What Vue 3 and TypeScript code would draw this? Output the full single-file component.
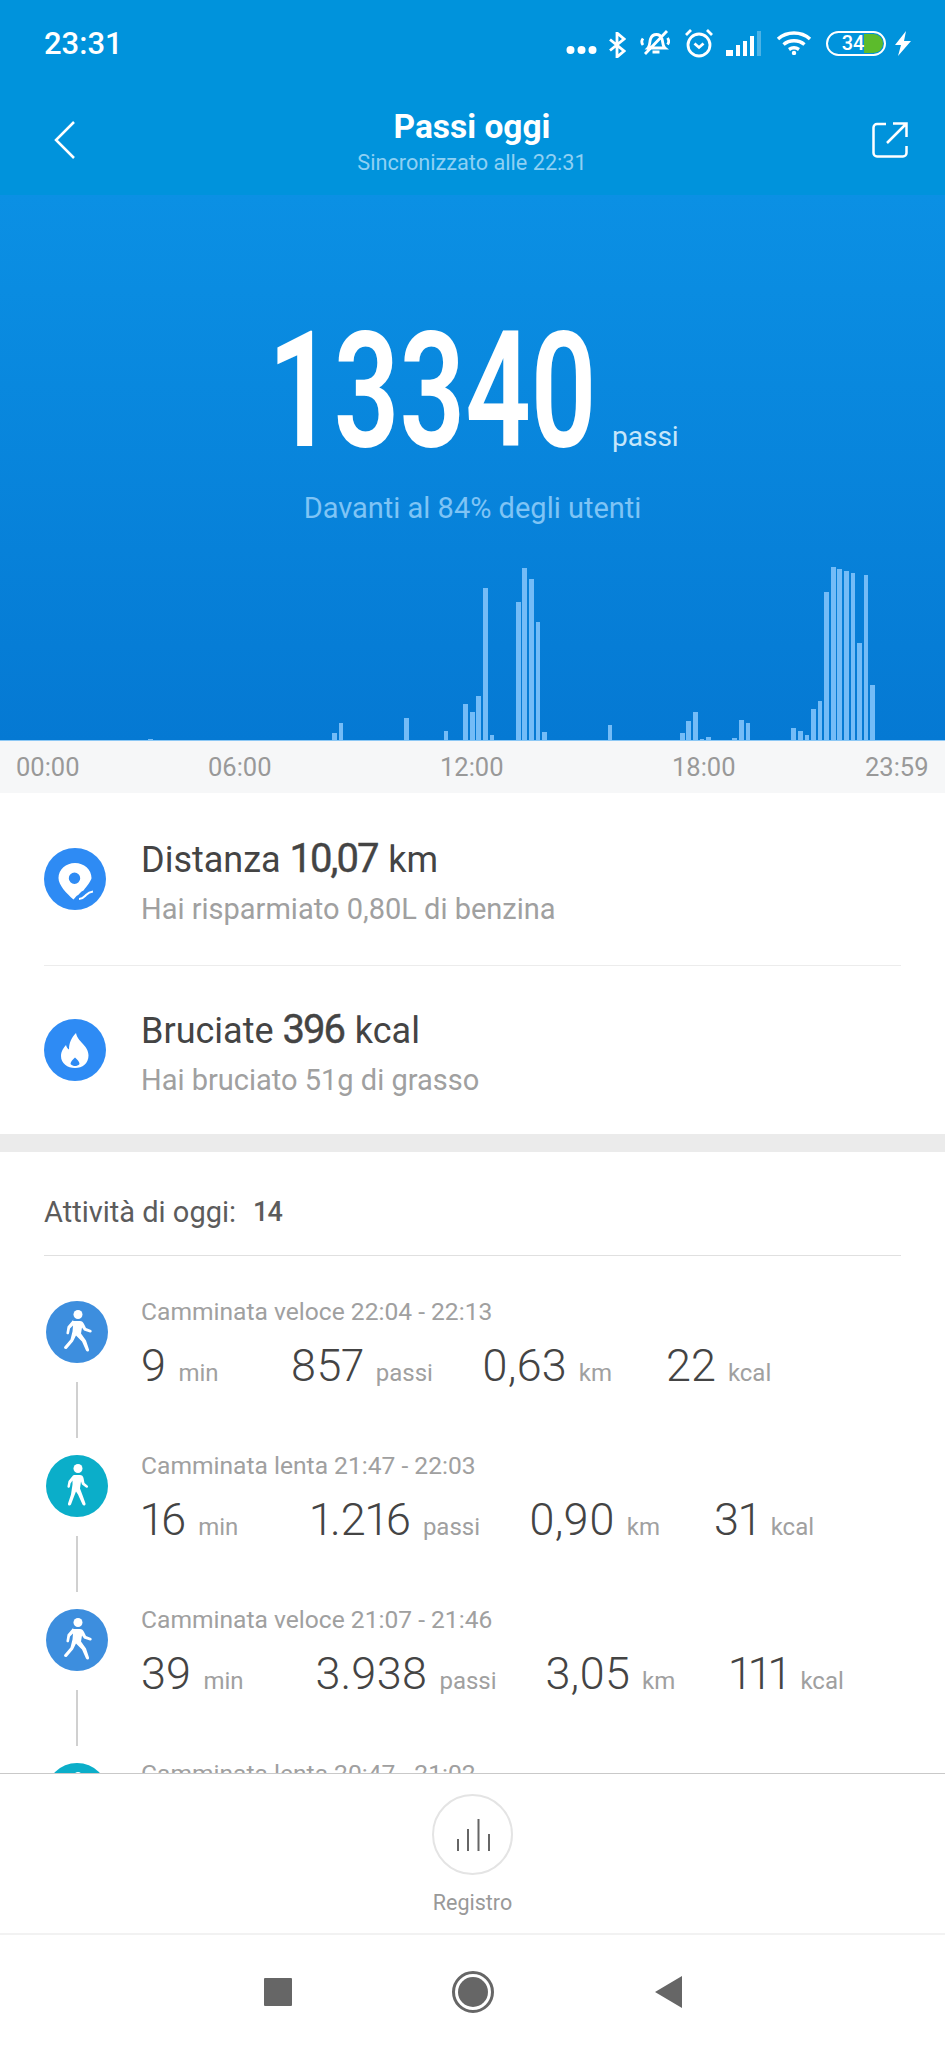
<template>
  <div class="screen">
    <header class="top">
      <div class="status">
        <span class="clock">23:31</span>
        <div class="status-icons">
          <svg class="ic dots" width="31" height="10" viewBox="0 0 31 10"><circle cx="4.500" cy="5" r="4" /><circle cx="15.500" cy="5" r="4" /><circle cx="26.500" cy="5" r="4" /></svg>
          <svg class="ic-line bt" width="18" height="26" viewBox="0 0 18 26"><path d="M2 7.500 16 19 9 25V1l7 6L2 18.500" /></svg>
          <svg class="ic-line" width="30" height="28" viewBox="0 0 30 28"><path d="M8 19c2-2 1.500-6 2.500-9 1-3 3.500-4.500 6-4.500S21 7 22 10s.5 7 3 9H8ZM12.500 23h7M27 2 5 25M3 9.500c-1.500 2-1.500 4.500 0 6.500M27.500 9c1.500 2 1.500 4.500 0 6.500" /></svg>
          <svg class="ic-line" width="30" height="30" viewBox="0 0 30 30"><circle cx="15" cy="17" r="11" /><path d="m10.500 15.500 4.500 4 4.500-4M2 7l5-5M28 7l-5-5" /></svg>
          <svg class="ic" width="36" height="25" viewBox="0 0 36 25"><rect x="0" y="19" width="7" height="6" /><rect x="10" y="14" width="4" height="11" /><rect x="17" y="10" width="4" height="15" /><rect x="24" y="5" width="4" height="20" /><rect x="31" y="0" width="4" height="25" opacity=".3" /></svg>
          <svg class="ic-wifi" width="36" height="24" viewBox="0 0 36 24"><path d="M2 8c9-8 23-8 32 0M7.500 13.500c6-5 15-5 21 0M13 18.500c3-2 7-2 10 0" /><circle cx="18" cy="22" r="2.200" fill="#fff" stroke="none" /></svg>
          <div class="battery"><i class="battery-fill"></i><span>34</span></div>
          <svg class="ic" width="16" height="25" viewBox="0 0 16 25"><path d="M11 0 0 14h6l-3 11L16 10H9l2-10Z" /></svg>
        </div>
      </div>
      <div class="nav">
        <svg class="back" width="22" height="38" viewBox="0 0 22 38"><path d="M20 1 2 19l18 18" /></svg>
        <div class="nav-title">
          <div class="title">Passi oggi</div>
          <div class="sub">Sincronizzato alle 22:31</div>
        </div>
        <svg class="share" width="36" height="36" viewBox="0 0 36 36"><path d="M14 2H5a3.500 3.500 0 0 0-3.500 3.500V31A3.500 3.500 0 0 0 5 34.500h26a3.500 3.500 0 0 0 3.500-3.500v-7M15 21 34 2M21 1.500h13.500V15" /></svg>
      </div>
    </header>

    <section class="hero">
      <div class="count">
        <span class="count-num">13340</span>
        <span class="count-unit">passi</span>
      </div>
      <div class="rank">Davanti al 84% degli utenti</div>
      <div class="chart">
        <div v-for="(h, i) in bars" :key="i" class="slot">
          <div v-if="h" class="bar" :style="{ height: h + 'px' }"></div>
        </div>
      </div>
    </section>

    <div class="axis">
      <span v-for="t in ticks" :key="t">{{ t }}</span>
    </div>

    <section class="summary">
      <div class="sum-row">
        <div class="sum-icon">
          <svg width="62" height="62" viewBox="0 0 62 62">
            <path fill="#fff" fill-rule="evenodd" d="M31 15c-9 0-16.500 6.500-16.500 15 0 7 8 15.500 15 21.500l3-3.500c3-1.500 4-4.500 7-5.500 4-5 8-10.500 8-12.500C47.500 21.500 40 15 31 15Zm-.5 9.500a5.700 5.700 0 1 1 0 11.400 5.700 5.700 0 0 1 0-11.400Z" />
            <path fill="none" stroke="#fff" stroke-width="2" d="M35 51c4 0 5-2 7-4s3-3 7-3.500" />
          </svg>
        </div>
        <div class="sum-text">
          <div class="sum-title">Distanza <b>10,07</b> km</div>
          <div class="sum-sub">Hai risparmiato 0,80L di benzina</div>
        </div>
      </div>
      <div class="sum-row sum-row-last">
        <div class="sum-icon">
          <svg width="62" height="62" viewBox="0 0 62 62">
            <path fill="#fff" fill-rule="evenodd" d="M32 14c1 5 3.500 7 6.500 10.500 3 3 6 7 6 12 0 8-6 12.500-13.500 12.500S17 44.500 17 37c0-5 3-8.500 5-11 .5 2 1.500 3.500 3 4.500C25 24 27.500 18.500 32 14Zm-1 24.500c-2 2-4.500 4-4.500 6.500 1.500 1.500 3 2 4.500 2s3.500-.5 4.500-2c0-2.500-2.500-4.500-4.500-6.500Z" />
          </svg>
        </div>
        <div class="sum-text">
          <div class="sum-title">Bruciate <b>396</b> kcal</div>
          <div class="sum-sub">Hai bruciato 51g di grasso</div>
        </div>
      </div>
    </section>

    <section class="activities">
      <div class="act-head">Attività di oggi:<span>14</span></div>
      <div class="act-list">
        <div v-for="(a, i) in activities" :key="i" class="act">
          <div class="rail">
            <div class="act-icon" :class="a.fast ? 'fast' : 'slow'">
              <svg width="62" height="62" viewBox="0 0 62 62" fill="#fff">
                <circle cx="32" cy="13.500" r="4.500" />
                <path v-if="a.fast" d="M27 20h7c2 0 3 1 4 3l2 4 5 2c1.500 1 .5 3-1 2.500l-6-2-2-3-1 6 5 7 3 9c.5 2-2 3-3 1l-4-9-6-6-3 6-6 7c-1.500 1.500-4-.5-2.500-2l6-7 2-8 .5-6-3 3-1 5c-.5 1.500-3 1-2.500-1l1-6 6-7Z" />
                <path v-else d="M28 20h6c2 0 3 1 3.500 3l1 5 3 2.500c1.500 1.500 0 3-1.500 2l-4-3-1-3-1 7 3 8 2.500 7c.5 2-2 3-3 1l-4.500-10-2-3-2 5-3 8c-1 2-3.500 1-3-1l3-9 1.500-10v-4l-2 3-.5 3c-.5 2-3 1.500-2.500-.5l1-5 4.500-5.500Z" />
              </svg>
            </div>
            <div class="rail-line"></div>
          </div>
          <div class="act-body">
            <div class="act-title">{{ a.title }}</div>
            <div class="stats">
              <span v-for="s in a.stats" :key="s.unit" class="stat">
                <span class="num">{{ s.value }}</span><span class="unit">{{ s.unit }}</span>
              </span>
            </div>
          </div>
        </div>
      </div>
    </section>

    <footer class="bottom">
      <div class="log-btn">
        <svg width="36" height="32" viewBox="0 0 36 32"><path d="M3 32V20M13 32V10M23.500 32V0M34 32V15" /></svg>
      </div>
      <div class="log-label">Registro</div>
    </footer>

    <div class="sysnav">
      <div class="sys-square"></div>
      <div class="sys-home"><i></i></div>
      <svg width="28" height="32" viewBox="0 0 28 32"><path fill="#666" d="M28 0v32L1 16 28 0Z" /></svg>
    </div>
  </div>
</template>

<script setup lang="ts">
interface Stat {
  value: string
  unit: string
}

interface Activity {
  title: string
  fast: boolean
  stats: Stat[]
}

// altezze lette dal grafico, una colonna ogni 10 minuti
const peaks: Record<number, number> = {
  22: 1, 50: 7, 51: 17, 61: 22, 67: 9, 70: 36, 71: 28, 72: 44, 73: 152, 74: 5,
  78: 138, 79: 172, 80: 161, 81: 118, 82: 8, 92: 15, 103: 7, 104: 19, 105: 28,
  106: 1, 107: 3, 111: 2, 112: 20, 113: 17, 120: 12, 121: 9, 122: 5, 123: 31,
  124: 39, 125: 148, 126: 173, 127: 171, 128: 169, 129: 167, 130: 97, 131: 165, 132: 55,
}

const bars: number[] = Array.from({ length: 144 }, (_, i) => peaks[i] ?? 0)

const ticks = ['00:00', '06:00', '12:00', '18:00', '23:59']

const makeStats = (min: string, steps: string, km: string, kcal: string): Stat[] => [
  { value: min, unit: 'min' },
  { value: steps, unit: 'passi' },
  { value: km, unit: 'km' },
  { value: kcal, unit: 'kcal' },
]

const activities: Activity[] = [
  { title: 'Camminata veloce 22:04 - 22:13', fast: true, stats: makeStats('9', '857', '0,63', '22') },
  { title: 'Camminata lenta 21:47 - 22:03', fast: false, stats: makeStats('16', '1.216', '0,90', '31') },
  { title: 'Camminata veloce 21:07 - 21:46', fast: true, stats: makeStats('39', '3.938', '3,05', '111') },
  // l'ultima riga resta tagliata dalla barra in basso, si vede solo il titolo
  { title: 'Camminata lenta 20:47 - 21:02', fast: false, stats: [] },
]
</script>

<style>
html,
body {
  margin: 0;
  background: #fff;
}
</style>

<style scoped>
.screen {
  width: 945px;
  height: 2048px;
  display: flex;
  flex-direction: column;
  overflow: hidden;
  background: #fff;
  font-family: Roboto, "Liberation Sans", sans-serif;
  color: #444;
}

.top {
  height: 195px;
  flex: none;
  background: #0093dc;
  color: #fff;
}

.status {
  height: 86px;
  display: flex;
  justify-content: space-between;
  align-items: center;
  padding: 0 34px 0 44px;
}

.clock {
  font-size: 31px;
  font-weight: 500;
}

.status-icons {
  display: flex;
  align-items: center;
  gap: 14px;
}

.status-icons > :nth-child(2) {
  margin-left: -3px;
}

.status-icons > :nth-child(5) {
  margin-left: -2px;
}

.status-icons > :nth-child(8) {
  margin-left: -5px;
}

.dots {
  margin-top: 14px;
}

.bt {
  margin-top: 4px;
}

.ic {
  fill: #fff;
}

.ic-line {
  fill: none;
  stroke: #fff;
  stroke-width: 2.800;
}

.ic-wifi {
  fill: none;
  stroke: #fff;
  stroke-width: 3.500;
}

.battery {
  position: relative;
  width: 60px;
  height: 25px;
  box-sizing: border-box;
  border: 2.500px solid #fff;
  border-radius: 13px;
  overflow: hidden;
  display: flex;
  align-items: center;
  justify-content: center;
  padding-right: 6px;
  font-size: 20px;
  font-weight: 500;
}

.battery span {
  position: relative;
}

.battery-fill {
  position: absolute;
  top: 1px;
  bottom: 1px;
  left: 36px;
  right: 1px;
  background: #5cbb2c;
  border-radius: 0 10px 10px 0;
}

.nav {
  display: flex;
  justify-content: space-between;
  align-items: center;
  padding: 21px 37px 0 54px;
}

.back {
  fill: none;
  stroke: #fff;
  stroke-width: 2.500;
  margin-top: -3px;
}

.share {
  fill: none;
  stroke: #fff;
  stroke-width: 2.500;
  margin-top: -3px;
}

.nav-title {
  text-align: center;
  padding-right: 4px;
}

.title {
  font-size: 33.500px;
  font-weight: 700;
  line-height: 40px;
}

.sub {
  margin-top: 3px;
  font-size: 21.700px;
  line-height: 26px;
  color: #8fd0f3;
}

.hero {
  height: 546px;
  flex: none;
  display: flex;
  flex-direction: column;
  background: linear-gradient(#0b90e4, #0579d3);
}

.count {
  margin-top: 126px;
  display: flex;
  align-items: baseline;
  padding-left: 268px;
}

.count-num {
  font-size: 162px;
  font-weight: 600;
  line-height: 140px;
  color: #fff;
  width: 330px;
  display: inline-block;
  transform: scaleX(0.71);
  transform-origin: left center;
  white-space: nowrap;
}

.count-unit {
  margin-left: 14px;
  font-size: 28px;
  line-height: 34px;
  color: #c6e6fa;
}

.rank {
  margin-top: 30px;
  text-align: center;
  font-size: 29px;
  line-height: 34px;
  color: #7fc4f5;
}

.chart {
  margin-top: auto;
  height: 176px;
  box-sizing: content-box;
  padding-left: 3px;
  display: flex;
  align-items: flex-end;
  overflow: hidden;
  border-bottom: 1px solid #8cc8f5;
}

.slot {
  flex: none;
  width: 6.5625px;
  display: flex;
  justify-content: center;
}

.bar {
  width: 4.700px;
  background: #74bcf7;
}

.axis {
  height: 52px;
  flex: none;
  display: grid;
  grid-template-columns: 192px 232px 232px 193px auto;
  align-items: center;
  padding: 0 16px;
  background: #f6f7f8;
  font-size: 25.500px;
  color: #999;
}

.summary {
  flex: none;
  padding: 0 44px;
  border-bottom: 18px solid #ebebeb;
}

.sum-row {
  height: 173px;
  display: flex;
  align-items: center;
  gap: 35px;
  border-bottom: 1px solid #ececec;
  box-sizing: border-box;
}

.sum-row-last {
  border-bottom: none;
  height: 168px;
}

.sum-icon {
  width: 62px;
  height: 62px;
  border-radius: 50%;
  background: #2e8bf4;
  flex: none;
}

.sum-text {
  padding-top: 4px;
}

.sum-title {
  font-size: 36px;
  line-height: 44px;
  color: #444;
}

.sum-title b {
  font-size: 40px;
  font-weight: 400;
  -webkit-text-stroke: 0.4px #444;
  letter-spacing: -2px;
  margin-right: 2px;
}

.sum-sub {
  margin-top: 10px;
  font-size: 29px;
  line-height: 34px;
  color: #a0a0a0;
}

.activities {
  flex: 1;
  min-height: 0;
  overflow: hidden;
  padding: 0 44px;
}

.act-head {
  height: 104px;
  padding-top: 16px;
  box-sizing: border-box;
  display: flex;
  align-items: center;
  gap: 17px;
  font-size: 29px;
  color: #5c5c5c;
  border-bottom: 1px solid #e0e0e0;
}

.act-head span {
  font-size: 27px;
  font-weight: 500;
  letter-spacing: -1px;
}

.act-list {
  padding-top: 45px;
}

.act {
  height: 154px;
  display: flex;
  gap: 33px;
}

.rail {
  width: 62px;
  margin-left: 2px;
  flex: none;
  display: flex;
  flex-direction: column;
  align-items: center;
}

.act-icon {
  width: 62px;
  height: 62px;
  border-radius: 50%;
}

.act-icon.fast {
  background: #3d8ede;
}

.act-icon.slow {
  background: #0baec9;
}

.rail-line {
  margin-top: 19px;
  width: 2px;
  height: 56px;
  background: #d0d0d0;
}

.act-title {
  font-size: 24.600px;
  line-height: 22px;
  color: #a0a0a0;
}

.stats {
  margin-top: 17px;
  display: flex;
  align-items: baseline;
}

.stat {
  display: flex;
  align-items: baseline;
  gap: 12px;
}

.stat:nth-child(2) {
  margin-left: 72px;
}

.stat:nth-child(3) {
  margin-left: 49px;
}

.stat:nth-child(4) {
  margin-left: 54px;
}

.num {
  font-size: 45px;
  font-weight: 300;
  line-height: 52px;
  color: #444;
  font-variant-numeric: proportional-nums;
}

.unit {
  font-size: 24px;
  color: #a0a0a0;
}

.bottom {
  height: 162px;
  flex: none;
  box-sizing: border-box;
  border-top: 1px solid #c9c9c9;
  border-bottom: 2px solid #f2f2f2;
  background: #fff;
  display: flex;
  flex-direction: column;
  align-items: center;
  padding-top: 20px;
}

.log-btn {
  width: 81px;
  height: 81px;
  box-sizing: border-box;
  border: 2px solid #e4e4e4;
  border-radius: 50%;
  display: flex;
  align-items: center;
  justify-content: center;
}

.log-btn svg {
  fill: none;
  stroke: #666;
  stroke-width: 2;
}

.log-label {
  margin-top: 15px;
  font-size: 21.500px;
  line-height: 26px;
  color: #999;
}

.sysnav {
  height: 113px;
  flex: none;
  display: flex;
  align-items: center;
  justify-content: center;
  gap: 160px;
}

.sys-square {
  width: 28px;
  height: 28px;
  background: #666;
  border-radius: 1px;
}

.sys-home {
  width: 42px;
  height: 42px;
  box-sizing: border-box;
  border: 3px solid #666;
  border-radius: 50%;
  padding: 3px;
}

.sys-home i {
  display: block;
  width: 100%;
  height: 100%;
  border-radius: 50%;
  background: #666;
}
</style>
